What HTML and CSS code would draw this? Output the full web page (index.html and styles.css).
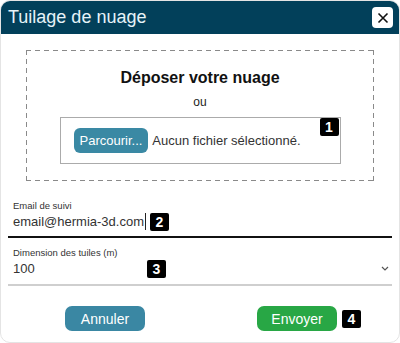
FILE: index.html
```html
<!DOCTYPE html>
<html lang="fr">
<head>
<meta charset="utf-8">
<link rel="stylesheet" href="styles.css">
</head>
<body>
<div class="dialog">
  <div class="header">
    <span class="title">Tuilage de nuage</span>
    <button class="close" aria-label="Fermer">
      <svg width="12" height="12" viewBox="0 0 12 12"><path d="M1.5 1.5 L10.5 10.5 M10.5 1.5 L1.5 10.5" stroke="#111" stroke-width="1.6" fill="none"/></svg>
    </button>
  </div>
  <div class="body">
    <div class="drop">
      <div class="drop-title">Déposer votre nuage</div>
      <div class="drop-or">ou</div>
      <div class="file">
        <span class="browse">Parcourir...</span>
        <span class="file-name">Aucun fichier sélectionné.</span>
        <span class="badge badge-file">1</span>
      </div>
    </div>
    <div class="field field-email">
      <div class="label">Email de suivi</div>
      <div class="value"><span>email@hermia-3d.com</span><span class="caret"></span><span class="badge">2</span></div>
    </div>
    <div class="field field-select">
      <div class="label">Dimension des tuiles (m)</div>
      <div class="value"><span class="num">100</span><span class="badge">3</span>
        <svg class="chev" width="8" height="5" viewBox="0 0 8 5"><path d="M1 1 L4 4 L7 1" stroke="#555" stroke-width="1.2" fill="none"/></svg>
      </div>
    </div>
    <div class="actions">
      <button class="btn btn-cancel">Annuler</button>
      <div class="send-wrap">
        <button class="btn btn-send">Envoyer</button>
        <span class="badge">4</span>
      </div>
    </div>
  </div>
</div>
</body>
</html>
```
FILE: styles.css
```css
* { box-sizing: border-box; }
html, body { margin: 0; padding: 0; background: #fff; }
body { font-family: "Liberation Sans", Arial, sans-serif; color: #222; }
.dialog {
  width: 400px;
  height: 343px;
  border: 1px solid #e4e4e4;
  border-radius: 10px;
  overflow: hidden;
  background: #fff;
}
.header {
  height: 34px;
  background: #02405a;
  display: flex;
  align-items: center;
  justify-content: space-between;
  padding: 0 7px 0 8px;
  margin: -1px -1px 0 -1px;
}
.title { color: #e6f3f8; font-size: 18px; }
.close {
  width: 21px; height: 21px;
  background: #fff;
  border: none;
  border-radius: 4px;
  padding: 0;
  display: flex; align-items: center; justify-content: center;
  margin-top: 1px;
}
.body { padding: 16px 7px 0 7px; }
.drop {
  margin: 0 18px;
  height: 131px;
  background:
    repeating-linear-gradient(90deg, #8a8a8a 0 5px, transparent 5px 9px) top left / 100% 1px no-repeat,
    repeating-linear-gradient(90deg, #8a8a8a 0 5px, transparent 5px 9px) bottom left / 100% 1px no-repeat,
    repeating-linear-gradient(180deg, #8a8a8a 0 5px, transparent 5px 9px) top left / 1px 100% no-repeat,
    repeating-linear-gradient(180deg, #8a8a8a 0 5px, transparent 5px 9px) top right / 1px 100% no-repeat;
  display: flex;
  flex-direction: column;
  align-items: center;
  padding-top: 19px;
}
.drop-title { font-weight: bold; font-size: 16px; color: #111; }
.drop-or { font-size: 12px; margin-top: 8px; color: #222; }
.file {
  position: relative;
  margin-top: 8px;
  width: 281px;
  height: 47px;
  border: 1px solid #ababab;
  display: flex;
  align-items: center;
  padding-left: 13px;
  gap: 4px;
}
.browse {
  background: #3a89a4;
  color: #fff;
  font-size: 13px;
  border-radius: 6px;
  padding: 5px 6px 5px 6px;
}
.file-name { font-size: 13px; color: #333; }
.badge {
  display: inline-flex;
  align-items: center;
  justify-content: center;
  width: 19px; height: 18px;
  background: #000;
  color: #fff;
  font-weight: bold;
  font-size: 14px;
  border-radius: 2px;
}
.badge-file { position: absolute; top: 0; right: 1px; }
.field { padding-left: 5px; }
.field-email { margin-top: 19px; border-bottom: 2px solid #111; padding-bottom: 5px; }
.field-select { margin-top: 9px; border-bottom: 2px solid #cfcfcf; padding-bottom: 6px; }
.label { font-size: 9.5px; color: #333; }
.value {
  display: flex;
  align-items: center;
  font-size: 13px;
  color: #333;
  margin-top: 1px;
  height: 19px;
}
.caret { width: 1px; height: 17px; background: #222; margin-left: 1px; margin-right: 4px; }
.num { width: 134px; }
.chev { margin-left: auto; margin-right: 3px; }
.actions {
  display: flex;
  padding-left: 57px;
  margin-top: 20px;
  align-items: center;
}
.btn {
  width: 80px; height: 25px;
  border: none;
  border-radius: 7px;
  color: #fff;
  font-family: "Liberation Sans", Arial, sans-serif;
  font-size: 14px;
  padding: 0;
}
.btn-cancel { background: #3a87a3; }
.send-wrap { display: flex; align-items: center; gap: 5px; margin-left: 112px; }
.btn-send { background: #28a745; }
```
